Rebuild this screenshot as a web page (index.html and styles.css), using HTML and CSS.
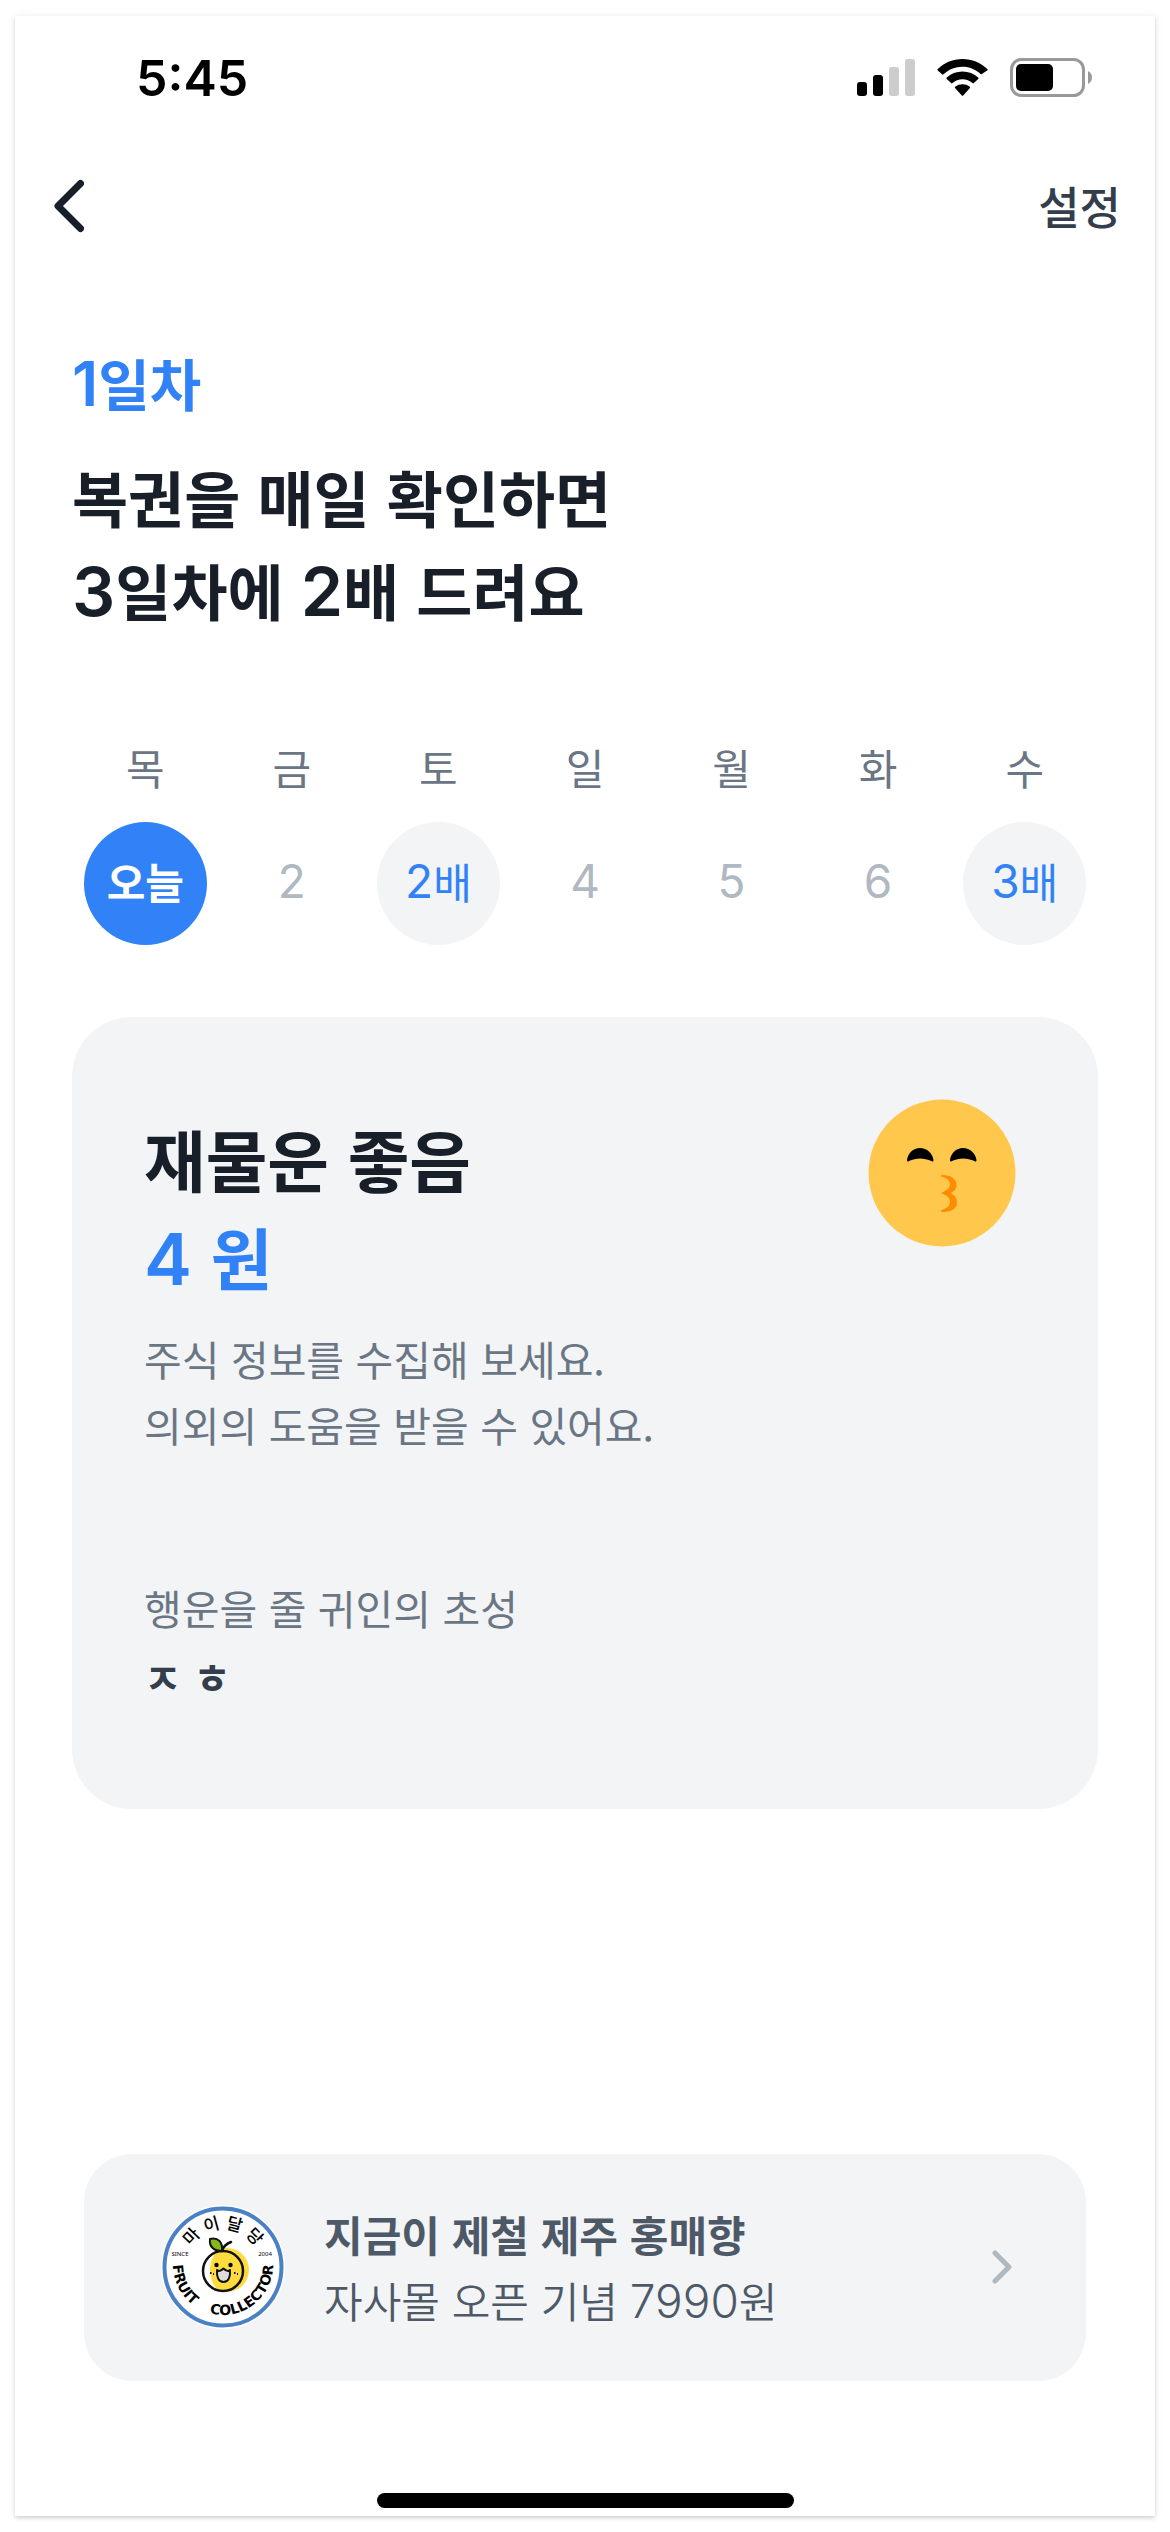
FILE: index.html
```html
<!DOCTYPE html>
<html lang="ko">
<head>
  <meta charset="utf-8">
  <meta name="viewport" content="width=device-width, initial-scale=1">
  <title>행운복권</title>
  <link rel="stylesheet" href="styles.css">
</head>
<body>
  <div class="screen">
    <div class="status-bar">
      <time class="clock">5:45</time>
      <div class="status-icons">
        <svg width="58" height="38" viewBox="0 0 58 38" aria-hidden="true">
          <rect x="0" y="23" width="10" height="14" rx="3"/>
          <rect x="16" y="16" width="10" height="21" rx="3"/>
          <rect x="32" y="8" width="10" height="29" rx="3" fill="#ccc"/>
          <rect x="48" y="0" width="10" height="37" rx="3" fill="#ccc"/>
        </svg>
        <svg width="51" height="38" viewBox="0 0 51 38" aria-hidden="true">
          <path d="M25.500 7.700C32.400 7.700 38.700 10.400 43.500 14.900C43.900 15.300 44.500 15.300 44.900 14.900L50.200 11.400C50.700 11 50.700 10.300 50.200 9.900C43.600 3.700 35 0 25.500 0S7.400 3.700.8 9.900C.3 10.300.3 11 .8 11.400L5 15.300C5.400 15.700 6 15.700 6.400 15.300C11.500 10.500 18 7.700 25.500 7.700Z"/>
          <path d="M25.500 20.200C29.300 20.200 32.800 21.600 35.500 24.100C35.900 24.500 36.500 24.500 36.900 24.100L41.200 20C41.700 19.600 41.700 19 41.200 18.600C37.100 14.800 31.600 12.600 25.500 12.600S13.900 14.800 9.800 18.600C9.300 19 9.300 19.600 9.800 20L14.100 24.100C14.500 24.500 15.100 24.500 15.500 24.100C18.200 21.600 21.700 20.200 25.500 20.200Z"/>
          <path d="M32.900 29.100C33.300 28.700 33.300 28.100 32.800 27.700C30.800 26 28.300 25.200 25.500 25.200S20.200 26 18.200 27.700C17.700 28.100 17.700 28.700 18.100 29.100L24.800 36.400C25.200 36.800 25.800 36.800 26.200 36.400Z"/>
        </svg>
        <svg width="82" height="40" viewBox="0 0 82 40" aria-hidden="true">
          <rect x="1.500" y="1.500" width="72" height="36" rx="10" fill="none" stroke="#999" stroke-width="3"/>
          <rect x="6" y="6" width="37" height="27" rx="5"/>
          <path d="M78 13C80.700 14.500 82 16.700 82 19.500S80.700 24.500 78 26Z" fill="#999"/>
        </svg>
      </div>
    </div>

    <nav class="top-nav">
      <button class="back" type="button" aria-label="뒤로">
        <svg width="30" height="54" viewBox="0 0 30 54" fill="none" stroke="#191f28" stroke-width="7" stroke-linecap="round" stroke-linejoin="round" aria-hidden="true">
          <path d="M26.500 4.500L4 27L26.500 49.500"/>
        </svg>
      </button>
      <button class="settings" type="button">설정</button>
    </nav>

    <main class="content">
      <p class="day-count"><span class="num">1</span>일차</p>
      <h1 class="headline">복권을 매일 확인하면<br><span class="num">3</span>일차에 <span class="num">2</span>배 드려요</h1>

      <ol class="week">
        <li class="day"><span class="weekday">목</span><span class="mark today">오늘</span></li>
        <li class="day"><span class="weekday">금</span><span class="mark"><span class="num">2</span></span></li>
        <li class="day"><span class="weekday">토</span><span class="mark bonus"><span class="num">2</span>배</span></li>
        <li class="day"><span class="weekday">일</span><span class="mark"><span class="num">4</span></span></li>
        <li class="day"><span class="weekday">월</span><span class="mark"><span class="num">5</span></span></li>
        <li class="day"><span class="weekday">화</span><span class="mark"><span class="num">6</span></span></li>
        <li class="day"><span class="weekday">수</span><span class="mark bonus"><span class="num">3</span>배</span></li>
      </ol>

      <section class="fortune">
        <div class="fortune-text">
          <h2 class="fortune-title">재물운 좋음</h2>
          <p class="prize"><span class="num">4</span> 원</p>
          <p class="advice">주식 정보를 수집해 보세요.<br>의외의 도움을 받을 수 있어요.</p>
          <dl class="helper">
            <dt>행운을 줄 귀인의 초성</dt>
            <dd>ㅈ ㅎ</dd>
          </dl>
        </div>
        <svg class="face" width="148" height="148" viewBox="0 0 148 148" role="img" aria-label="뽀뽀하는 얼굴">
          <circle cx="74" cy="74" r="73.500" fill="#ffc84c"/>
          <path d="M39 61C40 54 45 49 52 49S64.500 54 65.500 61C65.500 62.500 64.500 63 63.500 62C56 58.500 48 58.500 41 62C40 63 39 62.500 39 61Z"/>
          <path d="M82 61C83 54 88 49 95 49S107.500 54 108.500 61C108.500 62.500 107.500 63 106.500 62C99 58.500 91 58.500 84 62C83 63 82 62.500 82 61Z"/>
          <path d="M74 76C83 76 88.500 80 88.500 86C88.500 90 86 92.500 82.500 94C86.500 96 89 99 89 103.500C89 109.500 83 113.500 74 113C72.500 112.500 72.500 111.500 74 111C79 109.500 82 106.500 82 102.500C82 99 79.500 97 74.500 94.800C73.500 94.300 73.500 93.700 74.500 93.200C79 91 82 89 82 85.500C82 81.500 79 79 74 77.800C72.500 77.500 72.500 76.200 74 76Z" fill="#ff8c00"/>
        </svg>
      </section>

      <a class="promo" href="#">
        <svg class="logo" width="124" height="124" viewBox="0 0 124 124" role="img" aria-label="마이달당 프루트 컬렉터">
          <defs>
            <path id="arc-top" d="M24 62A38 38 0 0 1 100 62"/>
            <path id="arc-bottom" d="M12 60A50 50 0 0 0 112 60"/>
          </defs>
          <circle cx="62" cy="62" r="62" fill="#fff"/>
          <circle cx="62" cy="62" r="58.500" fill="none" stroke="#4a80c4" stroke-width="4"/>
          <text class="logo-name" text-anchor="middle"><textPath href="#arc-top" startOffset="50%">마 이 달 당</textPath></text>
          <text class="logo-tag"><textPath href="#arc-bottom" startOffset="0%">FRUIT</textPath></text>
          <text class="logo-tag" text-anchor="end"><textPath href="#arc-bottom" startOffset="100%">COLLECTOR</textPath></text>
          <text class="logo-year" x="19" y="51" text-anchor="middle">SINCE</text>
          <text class="logo-year" x="104" y="51" text-anchor="middle">2004</text>
          <circle cx="66" cy="65" r="22" fill="#ffdb3d"/>
          <path d="M48 51A20 20 0 0 0 49 80C51 82 54 84 56 84C51 79 49 72 49 65S51 54 54 48C52 48 50 49 48 51Z" fill="#fff"/>
          <circle cx="62" cy="66" r="20" fill="none" stroke="#111" stroke-width="2.500"/>
          <path d="M61 46C62 42 65 39 70 37" fill="none" stroke="#111" stroke-width="2.500" stroke-linecap="round"/>
          <path d="M49 34C57 32 62 37 61 46C53 46 48 42 49 34Z" fill="#86b817" stroke="#111" stroke-width="2"/>
          <circle cx="55.500" cy="60" r="2.200"/>
          <circle cx="69.500" cy="60" r="2.200"/>
          <path d="M56 65C58 67 60 66 62.500 63.500C65 66 67 67 69 65C69.500 72 67.500 77 62.500 77S55.500 72 56 65Z" fill="#ddd" stroke="#111" stroke-width="2" stroke-linejoin="round"/>
          <path d="M49 68H50.500M52 69H53M73 68H74.500M76 69H77" stroke="#111" stroke-width="2"/>
        </svg>
        <span class="promo-text">
          <strong class="promo-title">지금이 제철 제주 홍매향</strong>
          <span class="promo-sub">자사몰 오픈 기념 <span class="num">7990</span>원</span>
        </span>
        <svg width="20" height="34" viewBox="0 0 20 34" fill="none" stroke="#b0b8c1" stroke-width="5" stroke-linecap="round" stroke-linejoin="round" aria-hidden="true">
          <path d="M3 3L17 17L3 31"/>
        </svg>
      </a>
    </main>

    <div class="home-indicator"></div>
  </div>
</body>
</html>
```
FILE: styles.css
```css
:root {
  --ink: #191f28;
  --ink-soft: #333d4b;
  --text: #4e5968;
  --muted: #6b7684;
  --faint: #b0b8c1;
  --blue: #3182f6;
  --surface: #f2f4f6;
}

* {
  box-sizing: border-box;
}

body {
  display: flex;
  min-height: 100vh;
  margin: 0;
  padding: 16px 15px;
  background: #fff;
  color: var(--ink);
  font-family: "Noto Sans CJK KR", sans-serif;
  font-size: 42px;
  line-height: 66px;
}

h1, h2, p, ol, dl, dd {
  margin: 0;
  padding: 0;
}

svg {
  display: block;
  flex: none;
}

button {
  padding: 0;
  border: 0;
  background: none;
  color: inherit;
  font: inherit;
}

.num {
  font-family: Inter, sans-serif;
  font-size: 46px;
  line-height: 1;
}

.screen {
  display: flex;
  flex: 1;
  flex-direction: column;
  background: #fff;
  box-shadow: 0 2px 4px rgba(0, 0, 0, 0.16), 0 0 10px rgba(0, 0, 0, 0.05);
}

.status-bar {
  display: flex;
  align-items: center;
  justify-content: space-between;
  height: 124px;
  padding: 0 63px 0 121px;
  color: #000;
}

.clock {
  font-family: Inter, sans-serif;
  font-size: 50px;
  font-weight: 600;
}

.status-icons {
  display: flex;
  align-items: center;
  gap: 22px;
}

.top-nav {
  display: flex;
  align-items: center;
  justify-content: space-between;
  height: 132px;
  padding: 0 34px 0 39px;
}

.settings {
  color: var(--ink-soft);
  font-size: 45px;
  font-weight: 500;
}

.content {
  display: flex;
  flex: 1;
  flex-direction: column;
  padding: 70px 57px 112px;
}

.day-count {
  color: var(--blue);
  font-size: 56px;
  font-weight: 600;
  line-height: 80px;
}

.day-count .num {
  font-size: 62px;
}

.headline {
  margin-top: 28px;
  font-size: 61px;
  font-weight: 600;
  line-height: 93px;
}

.headline .num {
  font-size: 68px;
}

.week {
  display: grid;
  grid-template-columns: repeat(7, 1fr);
  margin-top: 98px;
  list-style: none;
}

.day {
  display: flex;
  flex-direction: column;
  align-items: center;
  gap: 22px;
}

.weekday {
  color: var(--muted);
}

.mark {
  display: flex;
  align-items: center;
  justify-content: center;
  width: 123px;
  height: 123px;
  padding-bottom: 5px;
  border-radius: 50%;
  color: var(--faint);
}

.today {
  background: var(--blue);
  color: #fff;
  font-weight: 600;
}

.bonus {
  background: var(--surface);
  color: var(--blue);
}

.fortune {
  display: flex;
  align-items: flex-start;
  justify-content: space-between;
  margin-top: 72px;
  padding: 82px 82px 84px 72px;
  border-radius: 60px;
  background: var(--surface);
}

.fortune-text {
  padding: 10px 0 14px;
}

.fortune-title,
.prize {
  font-size: 67px;
  font-weight: 600;
  line-height: 98px;
}

.prize {
  color: var(--blue);
}

.prize .num {
  font-size: 72px;
}

.advice {
  margin-top: 20px;
  color: var(--muted);
  font-size: 41px;
}

.helper {
  margin-top: 116px;
  color: var(--muted);
  font-size: 41px;
  line-height: 69px;
}

.helper dd {
  color: var(--ink-soft);
  font-weight: 600;
}

.promo {
  display: flex;
  align-items: center;
  gap: 39px;
  margin: auto 12px 0;
  padding: 47px 74px 48px 77px;
  border-radius: 48px;
  background: var(--surface);
  color: var(--text);
  text-decoration: none;
}

.promo-text {
  display: flex;
  flex: 1;
  flex-direction: column;
}

.promo-title {
  font-weight: 600;
}

.promo-sub {
  font-weight: 350;
}

.promo-sub .num {
  font-weight: 300;
}

.logo-name {
  font-size: 17px;
  font-weight: 500;
}

.logo-tag {
  font-family: "DejaVu Sans", sans-serif;
  font-size: 14px;
  font-weight: 700;
}

.logo-year {
  font-family: "Noto Sans", sans-serif;
  font-size: 6px;
}

.home-indicator {
  align-self: center;
  width: 417px;
  max-width: 60%;
  height: 15px;
  margin-bottom: 8px;
  border-radius: 8px;
  background: #000;
}
```
